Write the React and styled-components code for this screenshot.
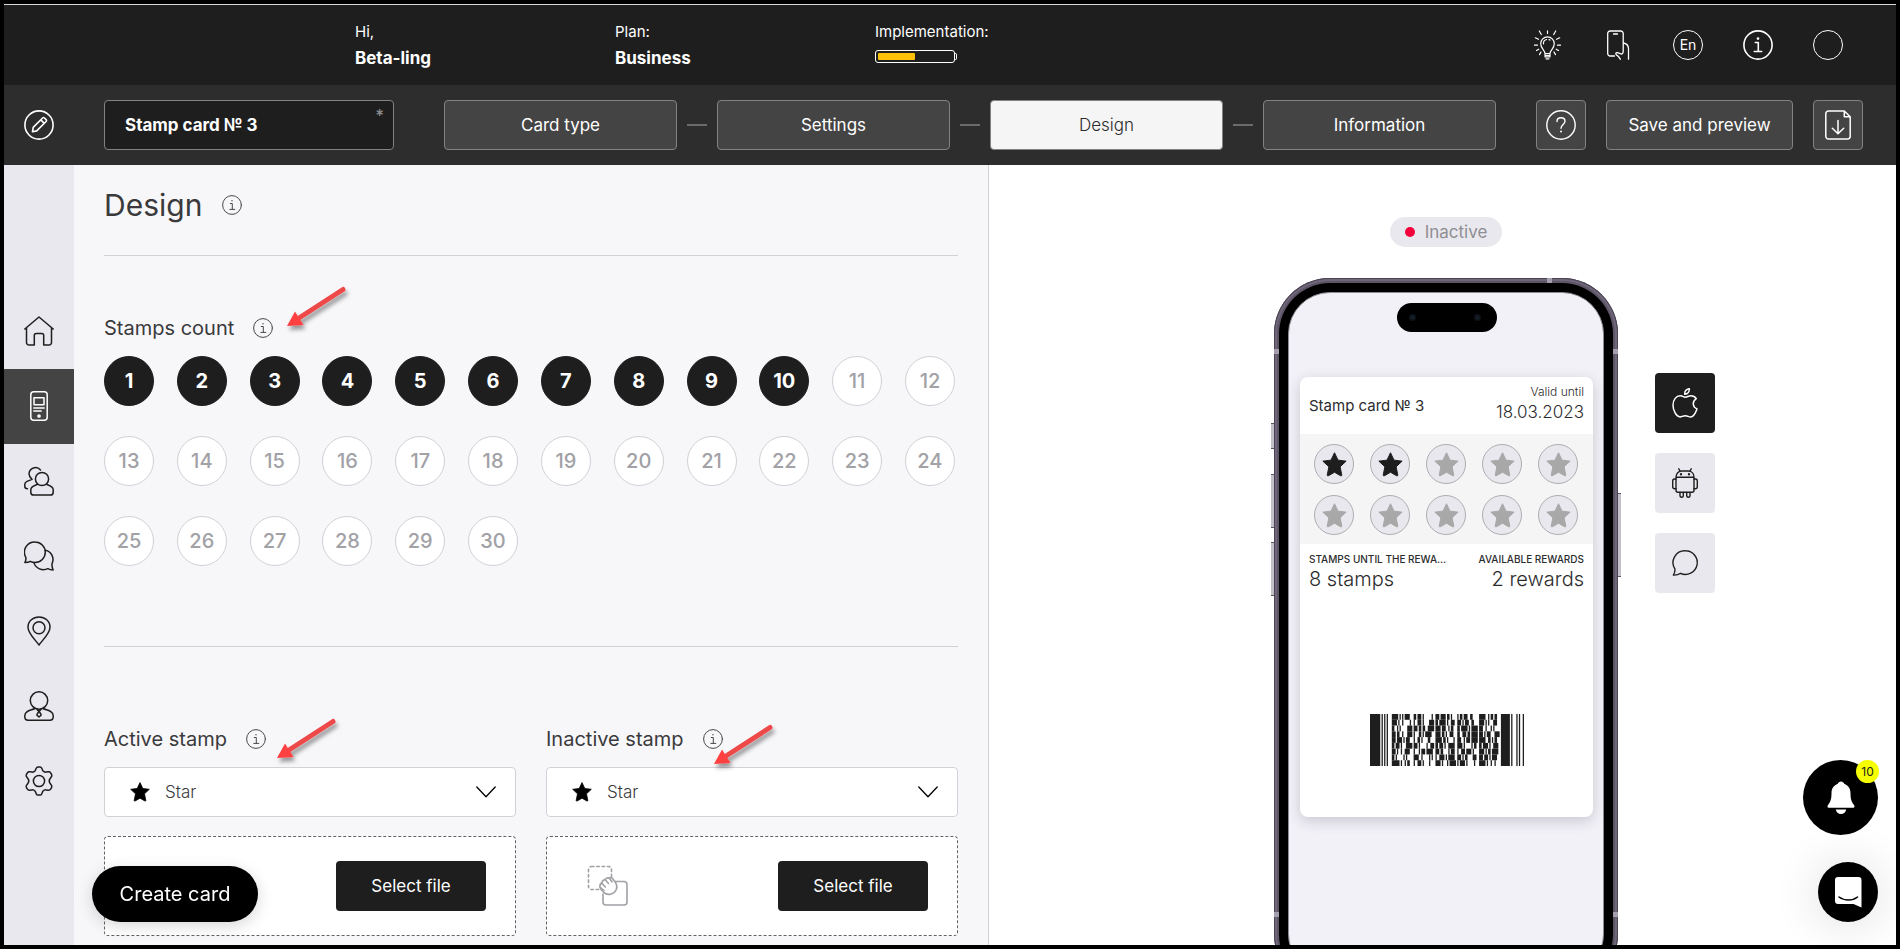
import React from "react";
import styled, { createGlobalStyle, css } from "styled-components";

const Global = createGlobalStyle`
  *, *::before, *::after { box-sizing: border-box; }
  html, body { margin: 0; padding: 0; }
  body {
    background: #000;
    color: #3a3a3c;
    font-family: Inter, "Liberation Sans", sans-serif;
    font-size: 17px;
    line-height: 24px;
  }
  button, input, select { font: inherit; margin: 0; }
  button { cursor: pointer; }
`;

/* ---------- page frame ---------- */

const Page = styled.div`
  display: flex;
  flex-direction: column;
  height: 100vh;
  border: 4px solid #000;
  overflow: hidden;
`;

const TopBar = styled.header`
  display: flex;
  align-items: center;
  justify-content: space-between;
  flex: 0 0 81px;
  padding: 0 53px 0 351px;
  border-top: 1px solid #d8d8d8;
  background: #1e1e1e;
  color: #fff;
`;

const Facts = styled.div`
  display: grid;
  grid-template-columns: repeat(3, 260px);
`;

const Fact = styled.div`
  display: flex;
  flex-direction: column;
  gap: 2px;
  font-size: 15px;
  strong { font-size: 17px; font-weight: 700; }
`;

const Battery = styled.div`
  position: relative;
  width: 80px;
  height: 13px;
  margin-top: 4px;
  padding: 2px;
  border: 1px solid #fff;
  border-radius: 3px;
  &::after {
    content: "";
    position: absolute;
    left: 100%;
    top: 2px;
    width: 3px;
    height: 7px;
    border: 1px solid #fff;
    border-left: 0;
    border-radius: 0 2px 2px 0;
  }
`;

const Charge = styled.div`
  width: 50%;
  height: 100%;
  border-radius: 1px;
  background: #ffc107;
`;

const Tools = styled.nav`
  display: flex;
  gap: 40px;
`;

const RoundTool = styled.button`
  display: grid;
  place-items: center;
  width: 30px;
  height: 30px;
  padding: 0;
  border: ${(p) => (p.$ring ? "1px solid #fff" : "0")};
  border-radius: 50%;
  background: transparent;
  color: #fff;
  font-size: 14px;
  line-height: 20px;
`;

const StepBar = styled.div`
  display: flex;
  align-items: center;
  flex: 0 0 80px;
  padding: 0 33px 0 20px;
  background: #2d2d2d;
  color: #fff;
`;

const NameField = styled.label`
  position: relative;
  margin: 0 50px;
  flex: 0 0 290px;
`;

const NameInput = styled.input`
  display: block;
  width: 100%;
  height: 50px;
  padding: 0 20px;
  border: 1px solid #828282;
  border-radius: 4px;
  background: #1e1e1e;
  color: #fff;
  font-size: 17px;
  font-weight: 700;
`;

const Required = styled.span`
  position: absolute;
  top: 4px;
  right: 10px;
  color: #8e8e93;
  font-size: 17px;
  font-weight: 500;
`;

const Steps = styled.nav`
  display: flex;
  align-items: center;
  gap: 10px;
  flex: 1;
  min-width: 0;
`;

const Connector = styled.span`
  flex: 0 0 20px;
  height: 2px;
  background: #6b6b6b;
`;

const barButton = css`
  height: 50px;
  padding: 0;
  border: 1px solid #828282;
  border-radius: 4px;
  background: #444;
  color: #fff;
  font-size: 17px;
`;

const Step = styled.button`
  ${barButton}
  flex: 1;
  ${(p) => p.$current && css`background: #f5f5f5; color: #2c2c2e; font-weight: 300;`}
`;

const Actions = styled.div`
  display: flex;
  gap: 20px;
  margin-left: 40px;
`;

const ActionButton = styled.button`
  ${barButton}
  display: grid;
  place-items: center;
  width: ${(p) => (p.$wide ? "187px" : "50px")};
`;

const Body = styled.div`
  display: grid;
  grid-template-columns: 70px minmax(0, 915fr) minmax(0, 907fr);
  flex: 1;
  min-height: 0;
`;

/* ---------- side menu ---------- */

const SideMenu = styled.nav`
  display: flex;
  flex-direction: column;
  padding-top: 129px;
  background: #e9e8ee;
`;

const SideLink = styled.a`
  display: grid;
  place-items: center;
  height: 75px;
  padding-bottom: 1px;
  background: ${(p) => (p.$current ? "#444" : "transparent")};
  color: ${(p) => (p.$current ? "#fff" : "#1e1e1e")};
`;

/* ---------- editor ---------- */

const Editor = styled.main`
  padding: 0 30px;
  overflow: hidden;
  border-right: 1px solid #d1d1d6;
  background: #f7f7fa;
`;

const TitleRow = styled.div`
  display: flex;
  align-items: center;
  gap: 20px;
  height: 91px;
  padding-bottom: 10px;
  border-bottom: 1px solid #d1d1d6;
`;

const Title = styled.h1`
  margin: 0;
  font-size: 30px;
  line-height: 40px;
  font-weight: 400;
`;

const Section = styled.section`
  ${(p) => p.$ruled && css`border-bottom: 1px solid #d1d1d6;`}
  padding: ${(p) => (p.$ruled ? "58px 0 80px" : "78px 0 0")};
`;

const LabelRow = styled.div`
  position: relative;
  display: inline-flex;
  align-items: center;
  gap: 19px;
  height: 28px;
  margin-bottom: 14px;
  color: #3a3a3c;
  font-size: 20px;
  line-height: 28px;
`;

const Info = styled.button`
  display: grid;
  place-items: center;
  padding: 0;
  border: 0;
  background: transparent;
  color: #48484a;
`;

const ArrowMark = styled.svg`
  position: absolute;
  z-index: 2;
  right: ${(p) => p.$right}px;
  top: ${(p) => p.$top}px;
  pointer-events: none;
`;

const StampGrid = styled.div`
  display: grid;
  grid-template-columns: repeat(12, 50px);
  justify-content: space-between;
  row-gap: 30px;
  padding-right: 3px;
`;

const StampButton = styled.button`
  height: 50px;
  padding: 0;
  border: 1px solid ${(p) => (p.$on ? "#1e1e1e" : "#d1d1d6")};
  border-radius: 50%;
  background: ${(p) => (p.$on ? "#1e1e1e" : "#fff")};
  color: ${(p) => (p.$on ? "#fff" : "#a1a1a6")};
  font-size: 20px;
  font-weight: ${(p) => (p.$on ? 700 : 500)};
`;

const Columns = styled.div`
  display: grid;
  grid-template-columns: 1fr 1fr;
  gap: 30px;
`;

const SelectBox = styled.div`
  display: grid;
  grid-template-columns: 26px 20px 1fr 20px 20px;
  align-items: center;
  height: 50px;
  color: #000;
  > * { grid-row: 1; }
  > svg { pointer-events: none; z-index: 1; }
  > svg:first-of-type { grid-column: 2; }
  > svg:last-of-type { grid-column: 4; }
`;

const Select = styled.select`
  grid-column: 1 / -1;
  width: 100%;
  height: 50px;
  padding: 0 60px;
  border: 1px solid #d1d1d6;
  border-radius: 4px;
  appearance: none;
  background: #fff;
  color: #3a3a3c;
  font-size: 17px;
  font-weight: 300;
`;

const DropZone = styled.div`
  display: flex;
  align-items: center;
  justify-content: space-between;
  height: 100px;
  margin: 19px 0 30px;
  padding: 0 29px 0 40px;
  border: 1px dashed #636366;
  border-radius: 4px;
  background: #fff;
`;

const FileButton = styled.button`
  width: 150px;
  height: 50px;
  padding: 0;
  border: 0;
  border-radius: 4px;
  background: #1e1e1e;
  color: #fff;
  font-size: 17px;
`;

/* ---------- preview ---------- */

const Preview = styled.aside`
  display: flex;
  flex-direction: column;
  align-items: center;
  gap: 31px;
  padding: 52px 0 0 7px;
  overflow: hidden;
  background: #fff;
`;

const Status = styled.div`
  display: flex;
  align-items: center;
  gap: 10px;
  padding: 3px 15px;
  border-radius: 15px;
  background: #e9e8ee;
  color: #8e8e93;
  &::before {
    content: "";
    width: 10px;
    height: 10px;
    border-radius: 50%;
    background: #f5003d;
  }
`;

const Stage = styled.div`
  display: grid;
  grid-template-columns: 1fr 344px 1fr;
  width: 100%;
`;

const Phone = styled.div`
  position: relative;
  grid-column: 2;
  height: 712px;
  padding: 5px;
  border-radius: 56px;
  background: #5d5467;
  box-shadow: inset 0 0 0 1px #4a4352, inset 0 0 0 3px #6f667a;
`;

const Bezel = styled.div`
  position: relative;
  height: 100%;
  padding: 9px;
  border-radius: 51px;
  background: #000;
`;

const Screen = styled.div`
  display: flex;
  flex-direction: column;
  align-items: center;
  height: 100%;
  padding: 10px 10px 0 11px;
  border: 1px solid #8e8c94;
  border-radius: 42px;
  background: #f2f1f7;
`;

const Island = styled.div`
  display: flex;
  align-items: center;
  justify-content: space-between;
  width: 100px;
  height: 29px;
  margin-bottom: 45px;
  padding: 0 16px 0 12px;
  border-radius: 15px;
  background: #000;
  &::before, &::after {
    content: "";
    width: 7px;
    height: 7px;
    border-radius: 50%;
    background: radial-gradient(#16222c, #06080a);
  }
`;

const SideKey = styled.span`
  position: absolute;
  ${(p) => (p.$right ? "left: 100%" : "right: 100%")};
  top: ${(p) => p.$top}px;
  width: 3px;
  height: ${(p) => p.$size}px;
  border: solid #5d5467;
  border-width: 1px 0;
  background: #c4c0c9;
`;

const Antenna = styled.span`
  position: absolute;
  width: 5px;
  height: 5px;
  background: #a49fad;
  ${(p) => p.$at}
`;

const Card = styled.article`
  width: 100%;
  height: 440px;
  border-radius: 8px;
  background: #fff;
  box-shadow: 0 4px 14px rgba(40, 35, 60, 0.2);
  color: #2c2c2e;
`;

const CardHead = styled.div`
  display: flex;
  align-items: center;
  justify-content: space-between;
  height: 57px;
  padding: 0 9px;
  font-size: 15px;
  line-height: 20px;
`;

const Valid = styled.div`
  display: flex;
  flex-direction: column;
  align-items: flex-end;
  padding-bottom: 8px;
  font-size: 12px;
  font-weight: 300;
  time { font-size: 17px; }
`;

const CardStamps = styled.div`
  display: grid;
  grid-template-columns: repeat(5, 40px);
  justify-content: space-between;
  row-gap: 11px;
  padding: 10px 15px 9px 14px;
  background: #f5f5f5;
`;

const CardStamp = styled.span`
  display: grid;
  place-items: center;
  height: 40px;
  border: 1px solid #aeaeb2;
  border-radius: 50%;
  background: #e9e8ee;
  color: ${(p) => (p.$on ? "#1e1e1e" : "#a8a8a8")};
`;

const CardTotals = styled.dl`
  display: flex;
  justify-content: space-between;
  margin: 0;
  padding: 7px 9px 0;
`;

const Total = styled.div`
  text-align: ${(p) => (p.$end ? "right" : "left")};
  dt {
    font-size: 10px;
    line-height: 16px;
    font-weight: 500;
    white-space: nowrap;
  }
  dd { margin: 0; font-size: 20px; line-height: 24px; font-weight: 300; }
`;

const CodeHolder = styled.div`
  display: flex;
  justify-content: center;
  padding-top: 123px;
`;

const Platforms = styled.div`
  display: flex;
  flex-direction: column;
  gap: 20px;
  padding: 95px 0 0 37px;
`;

const PlatformButton = styled.button`
  display: grid;
  place-items: center;
  width: 60px;
  height: 60px;
  padding: 0;
  border: 0;
  border-radius: 4px;
  background: ${(p) => (p.$on ? "#1e1e1e" : "#e9e8ee")};
  color: ${(p) => (p.$on ? "#fff" : "#1e1e1e")};
`;

/* ---------- floating controls ---------- */

const CreateButton = styled.button`
  position: fixed;
  left: 92px;
  bottom: 27px;
  width: 166px;
  height: 56px;
  padding: 0;
  border: 0;
  border-radius: 28px;
  background: #000;
  color: #fff;
  font-size: 20px;
  box-shadow: 0 4px 16px rgba(0, 0, 0, 0.16);
`;

const Floaters = styled.div`
  position: fixed;
  right: 22px;
  bottom: 27px;
  display: flex;
  flex-direction: column;
  align-items: flex-end;
  gap: 27px;
`;

const Floater = styled.button`
  position: relative;
  display: grid;
  place-items: center;
  width: ${(p) => p.$size}px;
  height: ${(p) => p.$size}px;
  padding: 0;
  border: 0;
  border-radius: 50%;
  background: #000;
  color: #fff;
  ${(p) => p.$glow && css`box-shadow: 0 2px 48px rgba(0, 0, 0, 0.14);`}
`;

const Badge = styled.span`
  position: absolute;
  top: 0;
  right: -1px;
  width: 23px;
  height: 23px;
  border-radius: 50%;
  background: #f6ff00;
  color: #1e1e1e;
  font-size: 12px;
  line-height: 23px;
  text-align: center;
`;

/* ---------- drawings ---------- */

function Icon({ size = 30, w = 1.4, children }) {
  return (
    <svg width={size} height={size} viewBox={`0 0 ${size} ${size}`} fill="none" stroke="currentColor"
      strokeWidth={w} strokeLinecap="round" strokeLinejoin="round" aria-hidden="true">
      {children}
    </svg>
  );
}

const STAR = "M10 .6l2.8 5.9 6.5.8-4.8 4.5 1.3 6.6c.1.6-.4.9-.9.6L10 16.2 5.100 19c-.5.300-1 0-.9-.6l1.300-6.600L.7 7.300l6.500-.8z";

const Star = ({ size = 20 }) => (
  <svg width={size} height={size} viewBox="0 0 20 20" fill="currentColor" stroke="currentColor"
    strokeWidth=".8" strokeLinejoin="round" aria-hidden="true"><path d={STAR} /></svg>
);

const Chevron = () => <Icon size={20} w={1.3}><path d="M.8 5l9.200 9.800L19.200 5" /></Icon>;

const InfoGlyph = () => (
  <Icon size={20} w={1}>
    <circle cx="10" cy="10" r="9.400" />
    <path d="M8.300 8.500h2v5.800M7.800 14.400h5" />
    <circle cx="10" cy="5.800" r=".7" fill="currentColor" stroke="none" />
  </Icon>
);

const BulbIcon = () => (
  <Icon w={1.200}>
    <path d="M12 23.500c0-3.300-4.300-5-4.300-9.800a6.800 6.800 0 0 1 13.600 0c0 4.800-4.300 6.500-4.300 9.800zM12 23.500v3.300h5v-3.300M12 25.300h5M13 28.800h3M10.500 13.800a4 4 0 0 1 3-4.300M16 9.600l1 .4" />
    <path d="M14.500 .8v2.800M6.300 1l2 3.500M22.700 1l-2 3.500M2.300 7.800L5.500 9.300M26.700 7.800L23.500 9.300M1.500 15.200h3M24.500 15.200h3M3.500 20.500l2.300-1.300M25.500 20.500l-2.300-1.300M6.500 24.600l1.500-2.600M22.500 24.600L21 22" />
  </Icon>
);

const HandPhoneIcon = () => (
  <Icon w={1.300}>
    <path d="M11 26H7.200a2.500 2.500 0 0 1-2.500-2.500v-20A2.500 2.500 0 0 1 7.200 1h10.500a2.500 2.500 0 0 1 2.500 2.500v17.800c0 2.200-1 3.200-3 2.400l-2.700-1c-1.600-.5-2.300 1.300-1 2.200 1.800 1.100 2.700 2.400 3.800 4.300M10.500 4h4M20.200 13c3.600.6 5.300 2.600 5.300 5.800v10.400M7 26h4.500" />
  </Icon>
);

const BigInfo = () => (
  <Icon w={1.600}>
    <circle cx="15" cy="15" r="14.100" />
    <path d="M12.300 12.500h3v8.800M11.300 21.500h7.400" />
    <circle cx="15" cy="8.600" r="1.300" fill="currentColor" stroke="none" />
  </Icon>
);

const PencilIcon = () => (
  <Icon w={1.600}>
    <circle cx="15" cy="15" r="14.100" />
    <path d="M8.500 21.800l.7-4.400L18.600 8c.6-.6 1.300-.6 1.900 0l1.600 1.600c.6.600.6 1.300 0 1.900l-9.400 9.400zM16.800 9.900l3.500 3.500" />
  </Icon>
);

const HelpIcon = () => (
  <Icon w={1.400}>
    <circle cx="15" cy="15" r="14.200" />
    <path d="M11 11.500c0-2.400 1.700-3.700 4-3.700s4 1.300 4 3.500c0 3-4 3.300-4 6.900" />
    <circle cx="15" cy="21.600" r="1" fill="currentColor" stroke="none" />
  </Icon>
);

const SaveFileIcon = () => (
  <Icon w={1.500}>
    <path d="M21.300 1H5.500A2.700 2.700 0 0 0 2.800 3.700v22.600A2.700 2.700 0 0 0 5.500 29h19a2.700 2.700 0 0 0 2.700-2.700V6.800zM21.300 1v5.800h5.900M15 10.500v13M9.300 18.200l5.700 5.500 5.700-5.500" />
  </Icon>
);

const sideIcons = {
  Home: <path d="M.8 13L15 1l14.200 12M2.500 11.600v14.800A2.500 2.500 0 0 0 5 29h5.300v-9.500a2 2 0 0 1 2-2h5.400a2 2 0 0 1 2 2V29H25a2.500 2.500 0 0 0 2.500-2.600V11.600" />,
  Cards: (
    <>
      <rect x="6.800" y=".8" width="16.400" height="28.400" rx="3" />
      <path d="M10 6.700h10v7H10zM9.800 17h10.400M9.800 20h7.400" />
      <circle cx="15" cy="25" r="1.100" fill="currentColor" />
    </>
  ),
  Clients: (
    <>
      <circle cx="18" cy="13" r="6.600" />
      <path d="M13.500 18.300c-2.700 1-6.700 1.800-6.700 5.500v2.400c0 1.700 1 2.900 2.800 2.900h16.800c1.700 0 2.800-1.200 2.800-2.900v-2.400c0-3.700-4-4.500-6.700-5.500M16.500 4A6.500 6.500 0 0 0 5 7.800c0 2.200.9 3.500 3 5.600l-5 2C1.500 16 .8 17 .8 18.500v1.800c0 1.400 1 2.500 2.700 2.500" />
    </>
  ),
  Chat: (
    <>
      <path d="M11 .9a10.300 10.300 0 0 1 0 20.600c-1.700 0-3.300-.4-4.800-1.200-1.700 1-3.400 1.300-5.300 1.200 1-1.700 1.200-3.300.9-5.200A10.300 10.300 0 0 1 11 .9z" />
      <path d="M21.500 9.300a9.400 9.400 0 0 1 6.500 13.400c-.2 2.300.2 4.200 1.100 6.300-2 0-3.600-.3-5.200-1.300a10 10 0 0 1-14-6.100" />
    </>
  ),
  Places: (
    <>
      <path d="M15 29C11.500 24 4 17.500 4 11.200 4 5 9 1 15 1s11 4 11 10.200C26 17.500 18.500 24 15 29z" />
      <circle cx="15" cy="11.700" r="6" />
    </>
  ),
  Manager: (
    <>
      <circle cx="15" cy="9.500" r="8.700" />
      <path d="M11 17.500c-4 2-10.200 2-10.200 7.200v1c0 2.100 1.200 3.500 3.300 3.500h21.800c2.100 0 3.300-1.400 3.300-3.500v-1c0-5.200-6.200-5.200-10.200-7.200M13 18.400l2 2 2-2M15 20.400c-1.200 1.800-2.400 3-2.100 3.700L15 26l2.100-1.900c.3-.7-.9-1.900-2.100-3.700z" />
    </>
  ),
  Settings: (
    <>
      <path d="M12.200 2.300c.4-1 1-1.400 1.800-1.400h2c.8 0 1.400.4 1.800 1.400l1 2.500c1 1 2 1.500 3.300 1.300l2.300-.4c1.100-.2 1.700.3 2.200 1.100l1 1.700c.5.900.5 1.600-.3 2.500l-1.300 1.700a4 4 0 0 0 0 4.600l1.300 1.700c.8.900.8 1.600.3 2.500l-1 1.700c-.5.800-1.100 1.300-2.200 1.100l-2.300-.4c-1.300-.2-2.300.3-3.300 1.300l-1 2.500c-.4 1-1 1.400-1.800 1.400h-2c-.8 0-1.400-.4-1.800-1.400l-1-2.500c-1-1-2-1.500-3.300-1.300l-2.300.4c-1.100.2-1.700-.3-2.200-1.100l-1-1.700c-.5-.9-.5-1.600.3-2.500L4 17.300a4 4 0 0 0 0-4.600L2.700 11c-.8-.9-.8-1.600-.3-2.500l1-1.700c.5-.8 1.100-1.300 2.200-1.100l2.300.4c1.300.2 2.300-.3 3.300-1.300z" />
      <circle cx="15" cy="15" r="5.600" />
    </>
  ),
};

const AppleIcon = () => (
  <Icon w={1.500}>
    <path d="M15 9.200c2.500 0 3.300-1.400 6-1.400 2 0 4 1 5.300 2.900-4.500 3-3.700 8.300.7 10.200-1 2.800-3.200 8-6.500 8-2 0-2.800-1.200-5.200-1.200-2.600 0-3.400 1.200-5.300 1.200-3.700 0-7-6.800-7-11.700 0-5.600 3.300-9.400 7.300-9.400 2.300 0 3.400 1.400 4.700 1.400zM14.800 6.300c-.5-2.800 1.500-5.300 4.500-5.600.3 2.900-1.600 5.300-4.500 5.600z" />
  </Icon>
);

const AndroidIcon = () => (
  <Icon w={1.400}>
    <path d="M6 9.200h18v13a2 2 0 0 1-2 2H8a2 2 0 0 1-2-2zM6 9c0-3.500 2.500-6 6-6h6c3.500 0 6 2.500 6 6M10 3L8.800.8M20 3l1.200-2.200" />
    <path d="M6 11H4.500C3.200 11 2.700 12 2.700 13v5.500c0 1.300.8 2.200 2 2.200H6M24 11h1.500c1.300 0 1.800 1 1.800 2v5.500c0 1.300-.8 2.200-2 2.200H24M10 24.500v3.200c0 2 3.300 2 3.300 0v-3.200M16.700 24.500v3.200c0 2 3.300 2 3.300 0v-3.200" />
    <circle cx="11" cy="6.300" r=".5" fill="currentColor" /><circle cx="19" cy="6.300" r=".5" fill="currentColor" />
  </Icon>
);

const BubbleIcon = () => (
  <Icon w={1.400}>
    <path d="M15.500 2.800a11.800 11.800 0 1 1-5 22.500c-1.700 1.300-4.500 1.900-7.200 1.800 1.500-1.800 2-3.700 1.600-6.200A11.800 11.800 0 0 1 15.500 2.800z" />
  </Icon>
);

const DragIcon = () => (
  <svg width="42" height="42" viewBox="0 0 42 42" fill="none" stroke="#a1a1a6" strokeWidth="1.600"
    strokeLinecap="round" strokeLinejoin="round" aria-hidden="true">
    <rect x="1.500" y="1.500" width="23" height="23" rx="3" strokeDasharray="2.500 2.800" />
    <path d="M28 16.500h9a3 3 0 0 1 3 3V37a3 3 0 0 1-3 3H19a3 3 0 0 1-3-3v-8" />
    <path d="M13 22.500c-.5-2 .3-3.500 1.700-4.500.5-2 1.700-3.200 3.400-3.500 1.200-1.500 2.500-2 4-1.500 1.800-.8 3.300-.3 4 1.400 3.200 3.400 5 6.700 3 10.600-2.300 4.500-8.600 5.700-12 2.700-1.800-1.500-3.300-2.800-4.100-5.200z" fill="#fff" />
    <path d="M14.700 18l3.600 4M18 14.500l3.500 4M22 13l3 3.800M13.500 22.500l3.500 3" />
  </svg>
);

const BellIcon = () => (
  <svg width="28" height="34" viewBox="0 0 28 34" fill="currentColor" aria-hidden="true">
    <path d="M14 .5c1.500 0 2.600 1 3.200 2.200 4 1.500 6.300 5 6.300 9.300 0 5.700.8 8.500 3.500 12 .9 1.200.7 2.700-.8 2.700H1.800c-1.500 0-1.700-1.500-.8-2.700 2.700-3.500 3.500-6.300 3.500-12 0-4.300 2.300-7.800 6.300-9.300C11.400 1.500 12.500.5 14 .5zM8.800 28.500h10.400c-.3 2.700-2.500 4.500-5.200 4.500s-4.900-1.800-5.200-4.500z" />
  </svg>
);

const MessengerIcon = () => (
  <svg width="27" height="31" viewBox="0 0 27 31" aria-hidden="true">
    <path d="M3 0h20.500a3 3 0 0 1 3 3v27.500l-8-3.500H3a3 3 0 0 1-3-3V3a3 3 0 0 1 3-3z" fill="currentColor" />
    <path d="M4 20c5.500 4 13.500 4 18.500 0" fill="none" stroke="#000" strokeWidth="1.500" strokeLinecap="round" />
  </svg>
);

/* Bar and space widths of each code word, one string per row. */
const CODE_ROWS = [
  "51111142 21311611 31412113 11213225 52112123",
  "41121512 12311441 21511232 31113224 41111333",
  "22111541 31212251 41321123 21511151 32131115",
  "31221341 13211153 41211233 22312151 31113341",
  "31411133 12211424 51211412 32113151 52211123",
  "21311351 31151231 21311252 41151121 21411242",
  "31121243 13113152 31241131 12314114 41112151",
  "21151115 42151111 12411152 31112432 31311143",
  "61121123 12311414 41131151 11411513 51121214",
];

function barsOf(widths, x, y, h) {
  const rects = [];
  let at = x;
  [...widths].forEach((digit, i) => {
    const n = Number(digit);
    if (i % 2 === 0) rects.push(<rect key={`${at}-${y}`} x={at} y={y} width={n} height={h} />);
    at += n;
  });
  return rects;
}

const Barcode = () => (
  <svg width="154" height="52" viewBox="0 0 120 54" preserveAspectRatio="none" fill="#1e1e1e" role="img" aria-label="Card code">
    {barsOf("81111113", 0, 0, 54)}
    {CODE_ROWS.map((row, r) => row.split(" ").map((word, c) => barsOf(word, 17 + c * 17, r * 6, 6)))}
    {barsOf("711311121", 102, 0, 54)}
  </svg>
);

function Pointer({ right, top }) {
  return (
    <ArrowMark $right={right} $top={top} width="68" height="52" viewBox="0 0 68 52" aria-hidden="true">
      <defs>
        <filter id="pointer-shadow" x="-20%" y="-20%" width="150%" height="150%">
          <feDropShadow dx="2" dy="4" stdDeviation="2" floodColor="#000" floodOpacity=".4" />
        </filter>
      </defs>
      <g filter="url(#pointer-shadow)">
        <path d="M14 34L58 5.500" stroke="#ee4a4a" strokeWidth="5" strokeLinecap="round" />
        <path d="M2 42L10 27.500 18.500 41z" fill="#ff4040" />
      </g>
    </ArrowMark>
  );
}

/* ---------- parts ---------- */

function Label({ text, arrow }) {
  return (
    <LabelRow>
      <span>{text}</span>
      <Info type="button" aria-label={`About ${text}`}><InfoGlyph /></Info>
      <Pointer {...arrow} />
    </LabelRow>
  );
}

function StampPicker({ text, arrow, art }) {
  return (
    <div>
      <Label text={text} arrow={arrow} />
      <SelectBox>
        <Select aria-label={text} defaultValue="Star"><option>Star</option></Select>
        <Star />
        <Chevron />
      </SelectBox>
      <DropZone>
        {art ? <DragIcon /> : <span />}
        <FileButton type="button">Select file</FileButton>
      </DropZone>
    </div>
  );
}

const STEPS = ["Card type", "Settings", "Design", "Information"];

export default function App() {
  return (
    <Page>
      <Global />
      <TopBar>
        <Facts>
          <Fact>Hi,<strong>Beta-ling</strong></Fact>
          <Fact>Plan:<strong>Business</strong></Fact>
          <Fact>Implementation:<Battery><Charge /></Battery></Fact>
        </Facts>
        <Tools aria-label="Tools">
          <RoundTool type="button" aria-label="Ideas"><BulbIcon /></RoundTool>
          <RoundTool type="button" aria-label="Mobile"><HandPhoneIcon /></RoundTool>
          <RoundTool type="button" $ring>En</RoundTool>
          <RoundTool type="button" aria-label="Info"><BigInfo /></RoundTool>
          <RoundTool type="button" aria-label="Account" $ring />
        </Tools>
      </TopBar>

      <StepBar>
        <RoundTool type="button" aria-label="Edit"><PencilIcon /></RoundTool>
        <NameField>
          <NameInput aria-label="Card name" defaultValue="Stamp card № 3" />
          <Required>*</Required>
        </NameField>
        <Steps aria-label="Steps">
          {STEPS.map((step, i) => (
            <React.Fragment key={step}>
              {i > 0 && <Connector />}
              <Step type="button" $current={step === "Design"}>{step}</Step>
            </React.Fragment>
          ))}
        </Steps>
        <Actions>
          <ActionButton type="button" aria-label="Help"><HelpIcon /></ActionButton>
          <ActionButton type="button" $wide>Save and preview</ActionButton>
          <ActionButton type="button" aria-label="Download"><SaveFileIcon /></ActionButton>
        </Actions>
      </StepBar>

      <Body>
        <SideMenu aria-label="Main">
          {Object.entries(sideIcons).map(([name, art]) => (
            <SideLink key={name} href="#" aria-label={name} $current={name === "Cards"}>
              <Icon w={1.500}>{art}</Icon>
            </SideLink>
          ))}
        </SideMenu>

        <Editor>
          <TitleRow>
            <Title>Design</Title>
            <Info type="button" aria-label="About design"><InfoGlyph /></Info>
          </TitleRow>
          <Section $ruled>
            <Label text="Stamps count" arrow={{ right: -80, top: -30 }} />
            <StampGrid>
              {Array.from({ length: 30 }, (_, i) => (
                <StampButton key={i} type="button" $on={i < 10}>{i + 1}</StampButton>
              ))}
            </StampGrid>
          </Section>
          <Section>
            <Columns>
              <StampPicker text="Active stamp" arrow={{ right: -77, top: -9 }} />
              <StampPicker text="Inactive stamp" arrow={{ right: -57, top: -3 }} art />
            </Columns>
          </Section>
        </Editor>

        <Preview>
          <Status>Inactive</Status>
          <Stage>
            <Phone>
              <SideKey $top={145} $size={26} />
              <SideKey $top={196} $size={54} />
              <SideKey $top={264} $size={54} />
              <SideKey $right $top={215} $size={84} />
              <Antenna $at="top: 0; right: 66px;" />
              <Antenna $at="top: 71px; left: 0;" />
              <Antenna $at="top: 71px; right: 0;" />
              <Antenna $at="bottom: 73px; left: 0;" />
              <Antenna $at="bottom: 73px; right: 0;" />
              <Bezel>
                <Screen>
                  <Island />
                  <Card>
                    <CardHead>
                      <span>Stamp card № 3</span>
                      <Valid><span>Valid until</span><time>18.03.2023</time></Valid>
                    </CardHead>
                    <CardStamps>
                      {Array.from({ length: 10 }, (_, i) => (
                        <CardStamp key={i} $on={i < 2}><Star size={25} /></CardStamp>
                      ))}
                    </CardStamps>
                    <CardTotals>
                      <Total><dt>STAMPS UNTIL THE REWA…</dt><dd>8 stamps</dd></Total>
                      <Total $end><dt>AVAILABLE REWARDS</dt><dd>2 rewards</dd></Total>
                    </CardTotals>
                    <CodeHolder><Barcode /></CodeHolder>
                  </Card>
                </Screen>
              </Bezel>
            </Phone>
            <Platforms>
              <PlatformButton type="button" aria-label="Apple" $on><AppleIcon /></PlatformButton>
              <PlatformButton type="button" aria-label="Android"><AndroidIcon /></PlatformButton>
              <PlatformButton type="button" aria-label="Chat"><BubbleIcon /></PlatformButton>
            </Platforms>
          </Stage>
        </Preview>
      </Body>

      <CreateButton type="button">Create card</CreateButton>
      <Floaters>
        <Floater type="button" aria-label="Notifications" $size={75}><BellIcon /><Badge>10</Badge></Floater>
        <Floater type="button" aria-label="Messenger" $size={60} $glow><MessengerIcon /></Floater>
      </Floaters>
    </Page>
  );
}
